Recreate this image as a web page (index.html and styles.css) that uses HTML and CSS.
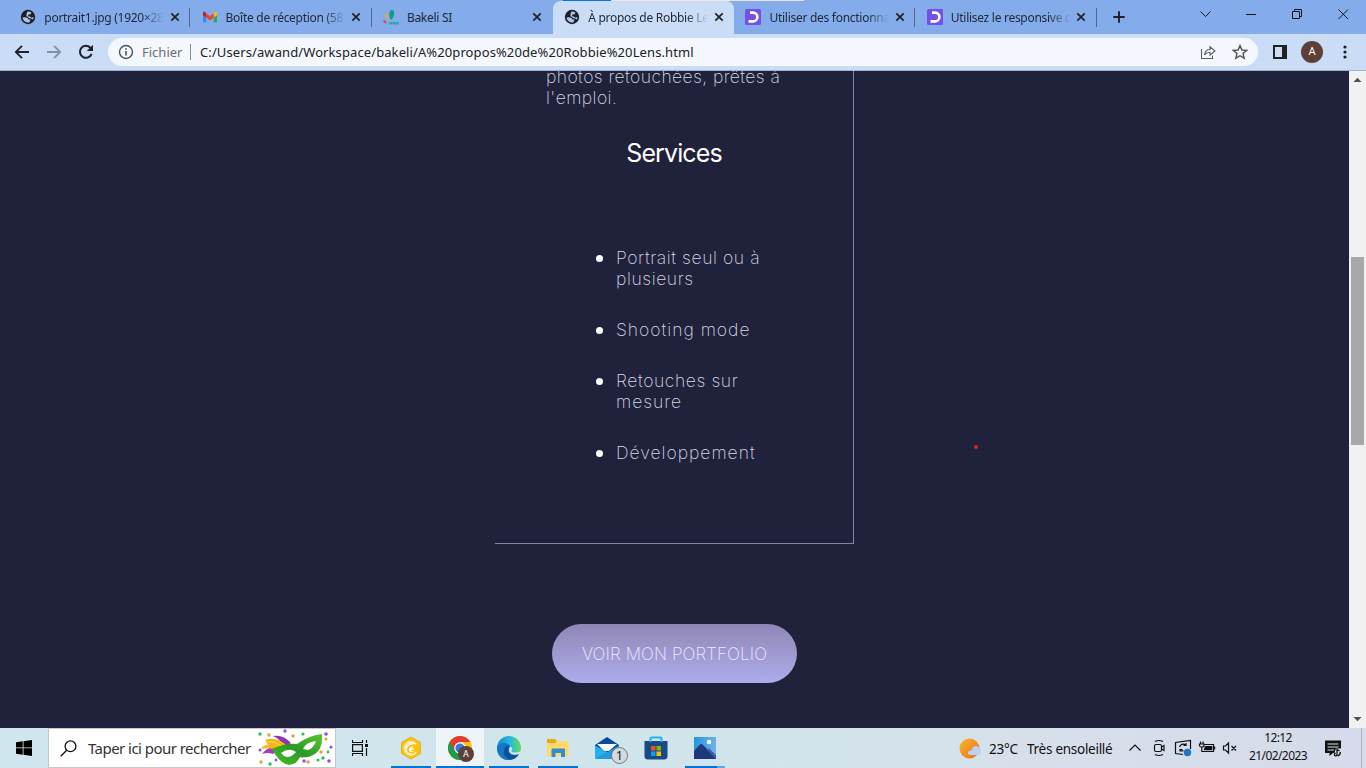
FILE: index.html
```html
<!DOCTYPE html>
<html lang="fr">
<head>
<meta charset="utf-8">
<title>À propos de Robbie Lens</title>
<link rel="stylesheet" href="styles.css">
</head>
<body>
<svg width="0" height="0" class="defs">
  <defs>
    <symbol id="globe" viewBox="0 0 16 16"><circle cx="8" cy="8" r="7.2" fill="#202124"/><path d="M2.500 8.500 5.500 8.200 7.600 9 8.500 10.500H10.500L9.500 13.300A5.500 5.500 0 0 1 2.500 8.500ZM7.500 2.400A5.500 5.500 0 0 1 11.500 3.800L10.500 5.200 8.500 5.400 8 7.200 9.800 7.600 11.500 8.800 13.500 8A5.600 5.600 0 0 1 13 10.500L11 9.600 9 9 6.500 7 6.500 5Z" fill="#a9c4f2"/></symbol>
    <symbol id="close" viewBox="0 0 10 10"><path d="M1.3 1.3 8.7 8.7M8.7 1.3 1.3 8.7" stroke="#202124" stroke-width="1.7"/></symbol>
    <symbol id="dclic" viewBox="0 0 16 16"><rect width="16" height="16" rx="1.5" fill="#7351e8"/><path d="M5 3.600H8A4.400 4.400 0 0 1 8 12.400H3.500" fill="none" stroke="#fff" stroke-width="2.600"/></symbol>
  </defs>
</svg>
<div class="screen">
  <header class="tabs">
    <div class="peek"></div>
    <div class="tab"><svg class="fav"><use href="#globe"/></svg><span class="title fade">portrait1.jpg (1920×28</span><svg class="x"><use href="#close"/></svg></div>
    <div class="tab"><svg class="fav" viewBox="0 0 16 16"><path d="M1 4V13.5H4.3V7Z" fill="#4285f4"/><path d="M15 4V13.5H11.7V7Z" fill="#34a853"/><path d="M1 3.6V6.2L4.3 8.6V4.4L3 3Q1 2 1 3.6Z" fill="#c5221f"/><path d="M15 3.6V6.2L11.7 8.6V4.4L13 3Q15 2 15 3.6Z" fill="#fbbc04"/><path d="M4.3 4.4 8 7.1 11.7 4.4V8.6L8 11.4 4.3 8.6Z" fill="#ea4335"/></svg><span class="title fade">Boîte de réception (58</span><svg class="x"><use href="#close"/></svg></div>
    <div class="tab nosep"><svg class="fav" viewBox="0 0 16 16"><path d="M8 11C5 7 6 1 9 .7 12 1 12 8 8 11Z" fill="#0aa08c"/><path d="M5.500 10C2.500 9 1.500 5 3 4.500S5.500 7 5.500 10Z" fill="#f9a31a"/><path d="M4 14C1 15 0 13 .5 11 2 10.500 3 12 4 14Z" fill="#e6453c"/><path d="M6 14.200H16" stroke="#19a896" stroke-width="2.600" stroke-dasharray="1.5 .4"/></svg><span class="title">Bakeli SI</span><svg class="x"><use href="#close"/></svg></div>
    <div class="tab active"><svg class="fav"><use href="#globe"/></svg><span class="title fade">À propos de Robbie Le</span><svg class="x"><use href="#close"/></svg></div>
    <div class="tab"><svg class="fav"><use href="#dclic"/></svg><span class="title fade">Utiliser des fonctionna</span><svg class="x"><use href="#close"/></svg></div>
    <div class="tab"><svg class="fav"><use href="#dclic"/></svg><span class="title fade">Utilisez le responsive d</span><svg class="x"><use href="#close"/></svg></div>
    <svg class="plus" viewBox="0 0 12 12"><path d="M6 .3V11.7M.3 6H11.7" stroke="#202124" stroke-width="1.9"/></svg>
    <svg class="win" viewBox="0 0 150 20" fill="none" stroke="#15171c"><path d="M.5 7.5 5.5 12.5 10.5 7.5"/><path d="M46 10.5H56"/><path d="M92.5 7.5H99.5V14.5H92.5Z M94.500 7.500V5.500H101.500V12.500H99.5"/><path d="M138.500 5.500 148 15M148 5.500 138.500 15"/></svg>
  </header>
  <div class="toolbar">
    <svg class="nav" viewBox="0 0 16 16"><path d="M15 8H2M8 1.800 1.800 8 8 14.200" fill="none" stroke="#202124" stroke-width="1.8"/></svg>
    <svg class="nav" viewBox="0 0 16 16"><path d="M1 8H14M8 1.800 14.200 8 8 14.200" fill="none" stroke="#8490a7" stroke-width="1.8"/></svg>
    <svg class="nav" viewBox="0 0 16 16"><path d="M13.600 9.800A6 6 0 1 1 12.300 3.700L14 5.400" fill="none" stroke="#202124" stroke-width="2"/><path d="M15 .8V7H8.800Z" fill="#202124"/></svg>
    <div class="omni">
      <svg class="info" viewBox="0 0 16 16"><circle cx="8" cy="8" r="6.500" fill="none" stroke="#505359" stroke-width="1.4"/><path d="M8 7V11.600M8 4.200V5.800" stroke="#505359" stroke-width="1.6"/></svg>
      <span class="file">Fichier</span><i class="bar"></i><span class="url">C:/Users/awand/Workspace/bakeli/A%20propos%20de%20Robbie%20Lens.html</span>
      <svg class="share" viewBox="0 0 16 16" fill="none" stroke="#5b5f66" stroke-width="1.1"><path d="M1.500 5V14.500H12.500V11.500"/><path d="M4.500 11C5 7.500 7 5.500 10 5.500V2.800L15 7 10 11V8.300C7.500 8.300 6 9 4.500 11Z"/></svg>
      <svg class="star" viewBox="0 0 16 16"><path d="M8 1.600 9.900 6 14.700 6.400 11 9.500 12.200 14.200 8 11.700 3.800 14.200 5 9.500 1.300 6.400 6.100 6Z" fill="none" stroke="#505359" stroke-width="1.400"/></svg>
    </div>
    <svg class="side" viewBox="0 0 14 14"><path d="M1 1H13V13H1Z" fill="none" stroke="#202124" stroke-width="2"/><path d="M9 1H13V13H9Z" fill="#202124"/></svg>
    <span class="avatar">A</span>
    <svg class="dots" viewBox="0 0 4 14" fill="#202124"><circle cx="2" cy="2" r="1.600"/><circle cx="2" cy="7" r="1.600"/><circle cx="2" cy="12" r="1.600"/></svg>
  </div>
  <div class="view">
    <main class="page">
      <section class="card">
        <p><span class="snug">photos retouchées, prêtes à</span><br><span class="snug">l'emploi.</span></p>
        <h2>Services</h2>
        <ul>
          <li>Portrait seul ou à<br>plusieurs</li>
          <li class="wide">Shooting mode</li>
          <li>Retouches sur<br><span class="wide">mesure</span></li>
          <li class="wide">Développement</li>
        </ul>
      </section>
      <a class="cta">VOIR MON PORTFOLIO</a>
      <i class="pointer"></i>
    </main>
    <aside class="scroll"><svg viewBox="0 0 17 17"><path d="M4.500 11 8.500 6.800 12.500 11Z"/></svg><i></i><svg viewBox="0 0 17 17"><path d="M4.500 6 8.500 10.200 12.500 6Z"/></svg></aside>
  </div>
  <footer class="task">
    <div class="start"><svg width="16" height="16" viewBox="0 0 16 16"><path d="M0 2.300 6.700 1.300V7.500H0ZM7.500 1.200 16 0V7.500H7.500ZM0 8.300H6.700V14.700L0 13.700ZM7.500 8.300H16V16L7.500 14.800Z"/></svg></div>
    <div class="search">
      <svg width="17" height="17" viewBox="0 0 17 17" fill="none" stroke="#111" stroke-width="1.300"><circle cx="10.500" cy="6.300" r="5.400"/><path d="M6.700 10.300.7 16.300"/></svg>
      <span>Taper ici pour rechercher</span>
      <svg class="mask" width="77" height="38" viewBox="0 0 77 38">
        <defs><linearGradient id="gm" x1="0" y1="1" x2="1" y2="0"><stop offset="0" stop-color="#4fbd22"/><stop offset=".5" stop-color="#2b9a26"/><stop offset="1" stop-color="#5bc72c"/></linearGradient></defs>
        <path d="M15 7Q25 5 33 14L27 18Q22 10 15 7Z" fill="#8d35b4"/><path d="M4 25Q12 15 20 20L15 25Q9 23 4 25Z" fill="#a53ac5"/><path d="M7 11Q19 7 29 17L20 21Q12 18 3 20 5 16 10 16Z" fill="#f6b719"/><path d="M8 13Q18 12 24 18" stroke="#ffdc54" fill="none"/>
        <path d="M14 20Q27 14 39 15 52 6 64 5 65 20 57 25 48 30 42 28 38 36 31 36 21 34 14 20Z" fill="url(#gm)"/>
        <path d="M23 24Q31 18 38 23 34 28 29 28 25 27 23 24ZM45 20Q48 13 58 12 56 19 50 21Z" fill="#fff"/>
        <g fill="#9b4bdc"><circle cx="27" cy="2" r="1.700"/><circle cx="68" cy="5" r="1.800"/><circle cx="73" cy="18" r="1.600"/><circle cx="46" cy="32" r="1.700"/><circle cx="71" cy="32" r="1.800"/><circle cx="2" cy="21" r="1.500"/><circle cx="18" cy="31" r="1.400"/></g>
        <g fill="#22c354"><circle cx="2" cy="5" r="1.700"/><circle cx="45" cy="5" r="1.600"/><circle cx="65" cy="29" r="1.700"/><circle cx="70" cy="23" r="1.400"/><circle cx="12" cy="35" r="1.700"/><circle cx="60" cy="31" r="1.500"/></g>
        <g fill="#d9a736"><circle cx="11" cy="6" r="1.700"/><circle cx="35" cy="7" r="1.700"/><circle cx="68" cy="10" r="1.500"/><circle cx="63" cy="23" r="1.700"/><circle cx="50" cy="33" r="1.800"/><circle cx="3" cy="33" r="1.700"/></g>
      </svg>
    </div>
    <svg class="tv" width="16" height="16" viewBox="0 0 16 16" fill="none" stroke="#111" stroke-width="1.200"><path d="M.5 0V2.500H10.500V0M.5 16V13.500H10.500V16M.6 4.600H10.400V11.400H.6ZM14.500 0V3M14.500 8V16"/><path d="M13 4H16V7H13Z" fill="#111" stroke="none"/></svg>
    <div class="apps">
      <div class="app on"><svg width="24" height="24" viewBox="0 0 24 24"><path d="M12 1 21.500 6.500V17.500L12 23 2.500 17.500V6.500Z" fill="#ffc20b" stroke="#e6b018"/><path d="M17.500 8A7 7 0 1 0 17.500 16.500Q13 17 12.500 14L15 13 12 11 15.500 9.500ZM7 7.500 11 10M6 13 10 14" fill="#fff6cf" stroke="#ffe7a0"/><path d="M16 9Q10 9 9 13T15 17" fill="none" stroke="#f3b40b" stroke-width="1.500"/></svg></div>
      <div class="app on cur"><svg width="24" height="24" viewBox="0 0 24 24"><circle cx="12" cy="12" r="12" fill="#fbc116"/><path d="M12 12 1.600 6A12 12 0 0 0 12 24L17 15Z" fill="#23994e"/><path d="M1.600 6A12 12 0 0 1 22.400 6H12L7 15Z" fill="#df3e32"/><circle cx="12" cy="12" r="5.800" fill="#fff"/><circle cx="12" cy="12" r="4.600" fill="#3577e5"/></svg><b class="badge a">A</b></div>
      <div class="app on"><svg width="24" height="24" viewBox="0 0 24 24"><defs><linearGradient id="ed" x1="0" x2="1"><stop stop-color="#1389d6"/><stop offset=".55" stop-color="#27b8dd"/><stop offset="1" stop-color="#69dc58"/></linearGradient></defs><circle cx="12" cy="12" r="12" fill="url(#ed)"/><path d="M0 12C1 6 13 5 13 12 9 16 15 20 22 17.500 19 23 14 24 11 24 4 24 0 18 0 12Z" fill="#1476c5"/><path d="M7 15Q8 9 13 10 9 14 13 18 18 21 22 17.500 18 25 11 23 6 20 7 15Z" fill="#104f98"/><path d="M13.500 10.500Q17 13 14 15 17 18 24 15L23 18Q12 21 12 13 12 11 13.500 10.500Z" fill="#d2e5ee"/></svg></div>
      <div class="app on"><svg width="22" height="20" viewBox="0 0 22 20"><path d="M0 1H8L10 3H21V18H0Z" fill="#e9a91b"/><path d="M0 5H8L10 3H21.500V18H0Z" fill="#ffda6a"/><path d="M4.500 19V11.500Q4.500 10.500 5.500 10.500H17Q18 10.500 18 11.500V19H14V15H8.500V19Z" fill="#338ccf"/></svg></div>
      <div class="app"><svg width="24" height="24" viewBox="0 0 24 24"><path d="M0 9 12 1 24 9V22H0Z" fill="#0b4b91"/><path d="M2 8H22L14 15H9Z" fill="#f5f8fa"/><path d="M0 9.500 13 16.500 0 23Z" fill="#28aeea"/><path d="M0 23 24 9.500V23Z" fill="#1f9be3"/></svg><b class="badge n">1</b></div>
      <div class="app"><svg width="24" height="24" viewBox="0 0 24 24"><path d="M.5 5H23.500V20Q23.500 23.500 20 23.500H4Q.5 23.500 .5 20Z" fill="#1a4a85"/><path d="M6.500 6V2.500Q6.500 1.500 7.500 1.500H16.500Q17.500 1.500 17.500 2.500V6" fill="none" stroke="#20b4ea" stroke-width="2"/><path d="M7 10H11.500V14.500H7Z" fill="#f25022"/><path d="M12.500 10H17V14.500H12.500Z" fill="#7fba00"/><path d="M7 15.500H11.500V20H7Z" fill="#00a4ef"/><path d="M12.500 15.500H17V20H12.500Z" fill="#ffb900"/></svg></div>
      <div class="app on photos"><svg width="22" height="22" viewBox="0 0 22 22"><defs><linearGradient id="ph" x1="0" x2="1"><stop stop-color="#2195df"/><stop offset="1" stop-color="#72b0ec"/></linearGradient></defs><rect width="22" height="22" fill="url(#ph)"/><path d="M0 14 6 7.500Q7.500 6.500 9 8L22 21V22H0Z" fill="#1c3979"/><path d="M13 13 15 11.500 22 18V22Z" fill="#3860a9"/><circle cx="15" cy="5" r="2.200" fill="#fff"/></svg></div>
    </div>
    <div class="weather"><svg width="23" height="22" viewBox="0 0 23 22"><defs><linearGradient id="sn" x1="0" y1="0" x2="1" y2="1"><stop stop-color="#f7b733"/><stop offset="1" stop-color="#f06c12"/></linearGradient></defs><circle cx="10.500" cy="10.500" r="10" fill="url(#sn)"/><path d="M11.500 17Q8 16.500 9 14 10 12 12.500 12.500 14 7.500 17.500 8 20.500 8.500 20.500 12 23 13 22 15.500 21 17 19 17Z" fill="#b9d3f8"/></svg><span class="deg">23°C</span><span class="sky">Très ensoleillé</span></div>
    <svg class="tray" width="112" height="20" viewBox="0 0 112 20" fill="none" stroke="#111" stroke-width="1.200">
      <path d="M1.500 12.500 7 7 12.500 12.500"/>
      <rect x="26.500" y="6.500" width="7" height="7" rx="1.500"/><path d="M33.500 9 36 7.500V12.500L33.500 11M27 3.500Q31 1.500 35 3.500M27 16.500Q31 18.500 35 16.500"/>
      <path d="M55 16.500 47.500 15.500V4.500L62.500 2.500V11M51.500 9A3.800 3.800 0 0 1 57.500 7M58 5V7.500H55.500M52 13.500V11.500H54.500M52.500 12.500Q54 13.500 55.500 12.500"/><circle cx="59.500" cy="14.500" r="3.700" fill="#2373c5" stroke="none"/>
      <path d="M76.500 6.500H85.500V13.500H75.500M72.500 3.500V5.500M75 3.500V5.500M71.500 6H76V7.500Q76 9 73.800 9T71.500 7.500ZM73.800 9V13.500H76M86.600 8.500V11.500"/><path d="M77.500 8.500H83.700V11.700H76.500Z" fill="#111"/>
      <path d="M95.500 8H97.500L100.500 5V15L97.500 12H95.500ZM103.500 8 108 12.500M108 8 103.500 12.500"/>
    </svg>
    <div class="clock"><span>12:12</span><span>21/02/2023</span></div>
    <svg class="note" width="17" height="17" viewBox="0 0 17 17"><path d="M0 .5H16V13H8L4.500 16V13H0Z" fill="#111"/><path d="M2.500 4H13.500M2.500 7H13.500M2.500 10H9" stroke="#d7deea" stroke-width="1.200"/><path d="M9 14 11 8.500H17V17H10Z" fill="#d7deea"/><path d="M12 14.500V9.500L14.500 11M12 14.500A1.300 1.300 0 1 1 10.700 13.200M15.300 12A4 4 0 0 1 12.500 16" fill="none" stroke="#111" stroke-width="1.300"/></svg>
    <i class="peekdesk"></i>
  </footer>
</div>
</body>
</html>
```
FILE: styles.css
```css
* { box-sizing: border-box; }
body { margin: 0; font-family: "Noto Sans", "Open Sans", sans-serif; color: #202124; }
svg { display: block; flex: none; }
.defs { position: absolute; }
.screen { width: 1366px; height: 768px; display: flex; flex-direction: column; overflow: hidden; }
.tabs { position: relative; height: 34px; flex: none; background: #84acea; display: flex; padding-left: 9px; }
.peek { position: absolute; left: 563px; top: 0; width: 241px; height: 1px; background: linear-gradient(90deg, #0078d7 48px, #e9e6e1 48px); z-index: 2; }
.tab { width: 181.300px; height: 34px; flex: none; display: flex; align-items: center; padding: 0 0 0 11.300px; position: relative; }
.tab::after { content: ""; position: absolute; right: 0; top: 8px; width: 1px; height: 19px; background: #50678c; }
.nosep::after, .active::after { display: none; }
.active { background: #cbdcf6; border-radius: 8px 8px 0 0; height: 33px; margin-top: 1px; padding-bottom: 1px; box-shadow: 0 8px #cbdcf6; }
.fav { width: 16px; height: 16px; }
.title { width: 126px; margin-left: 8px; font-size: 12px; letter-spacing: -.28px; white-space: nowrap; color: #202a3c; }
.fade { -webkit-mask-image: linear-gradient(90deg, #000 98px, transparent 120px); mask-image: linear-gradient(90deg, #000 98px, transparent 120px); }
.x { width: 10px; height: 10px; margin-left: -.5px; }
.plus { width: 12px; height: 12px; margin: 11px 0 0 16.200px; }
.win { width: 150px; height: 20px; margin: 4px 0 0 75px; }
.toolbar { height: 37px; flex: none; background: #cbdcf6; border-bottom: 1px solid #9fb1cd; display: flex; align-items: center; padding-left: 14px; position: relative; }
.nav { width: 16px; height: 16px; margin-right: 16px; }
.omni { width: 1150px; height: 28px; margin-left: -2px; border-radius: 14px; background: #f4f8fe; display: flex; align-items: center; padding-left: 10px; font-size: 13px; white-space: nowrap; }
.info { width: 16px; height: 16px; }
.file { width: 41px; margin-left: 8px; color: #6b6e74; }
.bar { width: 1px; height: 16px; margin: 0 9px 0 7px; background: #8a8e95; }
.url { width: 1000px; letter-spacing: .1px; }
.share { width: 16px; height: 16px; }
.star { width: 16px; height: 16px; margin-left: 16px; }
.side { width: 14px; height: 14px; margin-left: 15px; }
.avatar { width: 22px; height: 22px; margin-left: 14px; border-radius: 50%; background: #5d4037; color: #fff; font: 11px/22px Roboto, sans-serif; text-align: center; }
.dots { width: 4px; height: 14px; margin-left: 20px; }
.view { height: 657px; flex: none; display: flex; }
.page { width: 1349px; background: #20213b; position: relative; overflow: hidden; display: flex; flex-direction: column; align-items: flex-start; font-family: Inter, sans-serif; }
.card { width: 359px; height: 473px; margin-left: 495px; flex: none; border: solid #8583ae; border-width: 0 1px 1px 0; padding-left: 51px; color: #d9d9e4; font-size: 17.500px; font-weight: 200; line-height: 21px; letter-spacing: .58px; white-space: nowrap; }
.card p { margin: -5px 0 0; }
.snug { letter-spacing: .42px; }
.wide { letter-spacing: .98px; }
h2 { margin: 29px 0 0; width: 256px; text-align: center; font-size: 25px; line-height: 32px; font-weight: 400; color: #fff; letter-spacing: -.9px; }
ul { margin: 78px 0 0; padding-left: 70px; list-style: none; }
li { position: relative; margin-bottom: 30px; }
li::before { content: ""; position: absolute; left: -20px; top: 8px; width: 7px; height: 7px; border-radius: 50%; background: #fff; }
.cta { margin: 80px 0 0 552px; width: 245px; height: 59px; border-radius: 30px; background: linear-gradient(#8f86b5, #adadeb); display: flex; align-items: center; justify-content: center; color: #ecebff; font-size: 17px; line-height: 20px; letter-spacing: .12px; font-weight: 200; white-space: nowrap; }
.pointer { position: absolute; left: 974px; top: 374px; width: 4px; height: 4px; border-radius: 50%; background: #ed1c24; }
.scroll { width: 17px; background: #f1f1f1; display: flex; flex-direction: column; fill: #505050; }
.scroll svg { width: 17px; height: 17px; }
.scroll i { width: 13px; height: 188px; margin: 169px 0 266px 2px; background: #a8a8a8; }
.task { position: relative; height: 40px; flex: none; display: flex; align-items: center; background: linear-gradient(90deg, #d0e6ee, #d1e4ec 55%, #d6e0eb 75%, #d6daea); color: #111; }
.start { width: 48px; padding-left: 16px; }
.search { width: 288px; height: 40px; flex: none; background: #fff; border: 1px solid #c5c8ca; display: flex; align-items: center; padding-left: 11px; font-size: 15px; color: #333; }
.search span { margin-left: 11px; width: 170px; letter-spacing: -.54px; white-space: nowrap; }
.tv { margin-left: 16px; }
.apps { display: flex; margin-left: 19px; }
.app { width: 48px; height: 40px; margin-right: 1px; display: flex; align-items: center; justify-content: center; position: relative; }
.on::after { content: ""; position: absolute; left: 4px; right: 4px; bottom: 0; height: 2px; background: #0074d4; }
.cur { background: #edf5f9; }
.cur::after { left: 0; right: 0; }
.photos::after { background: linear-gradient(90deg, #0074d4 80%, #5ea5e3 80%); }
.badge { position: absolute; border-radius: 50%; text-align: center; }
.a { left: 22px; top: 18px; width: 16px; height: 16px; background: #5d4037; color: #fff; font: 9px/16px Roboto, sans-serif; }
.n { left: 28px; top: 19px; width: 17px; height: 17px; border: 1px solid #777; background: #d1dadd; font: 12px/15px "Noto Sans", sans-serif; }
.weather { position: absolute; left: 959px; top: 10px; height: 21px; display: flex; align-items: center; font-size: 13.500px; white-space: nowrap; }
.deg { width: 31px; margin: 0 7px; letter-spacing: -.2px; }
.sky { letter-spacing: -.27px; }
.tray { position: absolute; left: 1128px; }
.clock { position: absolute; left: 1244px; width: 68px; height: 38px; display: flex; flex-direction: column; align-items: center; font-size: 12px; line-height: 18px; letter-spacing: -.6px; }
.note { position: absolute; left: 1325px; }
.peekdesk { position: absolute; left: 1361px; width: 1px; height: 40px; background: #a9b1bd; }
```
